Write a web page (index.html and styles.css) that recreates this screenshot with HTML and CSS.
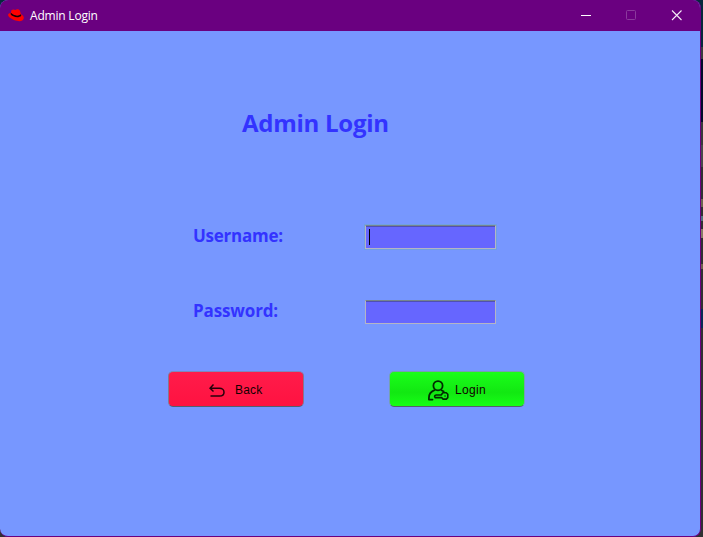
FILE: index.html
```
<!DOCTYPE html>
<html lang="en">
<head>
<meta charset="utf-8">
<title>Admin Login</title>
<link rel="stylesheet" href="styles.css">
</head>
<body>
<div class="window">
  <header class="titlebar">
    <svg class="hat" viewBox="0 0 16 13" width="16" height="13">
      <path fill="#f00" d="M3.4 1.2C5 .1 6 .5 7.300 .9 9-.2 11.400.2 12 1.900L13 5.200C15 6 16 7.700 15.700 9.300 15.300 12 12 12.600 9 11.800 5 11 .5 8.600 .1 6 0 4.500 1.300 4 2.700 4.200Z"/>
      <path fill="#160008" d="M2.900 3.800C5 6.300 10 7.900 12.800 5.300L13.300 6.700C10.500 9.500 4.500 7.900 2.600 5.200Z"/>
    </svg>
    <span class="caption">Admin Login</span>
    <svg class="controls" width="102" height="12" viewBox="0 0 102 12" fill="none">
      <path stroke="#fff" d="M0 5.500h10"/>
      <rect x="45.500" y=".5" width="9" height="9" rx="1" stroke="#8b3a9d"/>
      <path stroke="#f5eaf7" stroke-width="1.100" d="M91 .5l9.500 9.500M100.500 .5L91 10"/>
    </svg>
  </header>
  <main class="content">
    <h1>Admin Login</h1>
    <form>
      <div class="row"><label>Username:</label><div class="field focused"><i class="caret"></i></div></div>
      <div class="row"><label class="pass">Password:</label><div class="field"></div></div>
      <div class="actions">
        <button type="button" class="back">
          <svg width="16" height="13" viewBox="0 0 16 13" fill="none" stroke="#26000a" stroke-width="1.500"><path d="M4.500 .5L1 4.200l3.500 3.300M1 4.200h9.500c2.500 0 4.500 1.600 4.500 4s-2 3.900-4.500 3.900H1.500"/></svg>
          <span>Back</span>
        </button>
        <button type="button" class="login">
          <svg width="21" height="21" viewBox="0 0 21 21" fill="none" stroke="#002b00" stroke-width="1.800" stroke-linecap="round" stroke-linejoin="round"><circle cx="10" cy="5.700" r="4.600"/><path d="M6.500 10.200C3 11.500 .9 14.500 .9 18v1.600H4.500M13.500 10.300l2.200 1.300"/><path stroke-width="1.600" d="M13.200 15H8.200c-1.800 0-2 1.800-1 2.600h6.400l1.300 1.500h3.400l1.500-1.500v-3.300l-1.500-1.500h-3.400L13.200 15"/><path stroke-width="1.300" d="M17 16h.1"/></svg>
          <span>Login</span>
        </button>
      </div>
    </form>
  </main>
</div>
</body>
</html>
```
FILE: styles.css
```
* { box-sizing: border-box; }
body {
  margin: 0;
  width: 703px;
  height: 537px;
  overflow: hidden;
  background: linear-gradient(#07283c 0 47px, #3a3a3e 47px 59px, #020b2b 59px 122px, #39393b 122px 145px, #48484a 145px 167px, #303032 167px 199px, #6c644f 199px 207px, #303032 207px 216px, #52727c 216px 221px, #303032 221px 229px, #857b65 229px 238px, #303032 238px 264px, #6f604c 264px 269px, #303032 269px 309px, #082a55 309px 328px, #303032 328px);
}
.window {
  width: 701px;
  height: 537px;
  border: solid #6a0080;
  border-width: 0 1px 1px 0;
  border-radius: 8px;
  overflow: hidden;
  background: #7797ff;
}
.titlebar {
  display: flex;
  align-items: center;
  height: 31px;
  padding: 0 17px 0 8px;
  background: #6a0080;
}
.caption {
  margin-left: 6px;
  font: 12px/16px "Open Sans", sans-serif;
  letter-spacing: -.2px;
  color: #fff;
  white-space: nowrap;
}
.controls { margin-left: auto; }
.content {
  color: #3333ff;
}
h1 {
  margin: 0;
  padding: 75px 0 0 242px;
  font: bold 24px/34px "Open Sans", sans-serif;
  letter-spacing: -.27px;
}
form { padding: 85px 0 0 168px; }
.row {
  display: flex;
  height: 24px;
  margin-bottom: 51px;
  padding-left: 25px;
}
label {
  width: 172px;
  font: bold 17px/22px "Open Sans", sans-serif;
  letter-spacing: -.25px;
}
.pass { letter-spacing: -.13px; }
.field {
  width: 131px;
  height: 24px;
  padding: 3px;
  border: 1px solid #b5b5c4;
  border-top-color: #77858b;
  background: linear-gradient(#5050b0 0 1px, #6666ff 1px);
}
.focused { box-shadow: 0 0 0 1px #70a0e0; }
.caret {
  display: block;
  width: 1px;
  height: 16px;
  background: #000;
}
.actions {
  display: flex;
  gap: 85px;
  margin-top: -4px;
}
button {
  display: flex;
  align-items: center;
  width: 136px;
  height: 36px;
  padding: 2px 0 0 40px;
  border: 1px solid #86768f;
  border-top-color: #8088b8;
  border-bottom: 1px solid #555e70;
  border-radius: 5px;
  font: 12px/16px "Liberation Sans", sans-serif;
  letter-spacing: .2px;
  color: #100;
}
.back { background: linear-gradient(#ff1c4a, #ff1241); }
.back span { margin-left: 10px; }
.login {
  padding-left: 38px;
  border-color: #75a0b0;
  border-bottom-color: #555e70;
  background: linear-gradient(#1aff1a, #12e812 60%, #16ff16);
}
.login span { margin-left: 6px; letter-spacing: .35px; }
```
